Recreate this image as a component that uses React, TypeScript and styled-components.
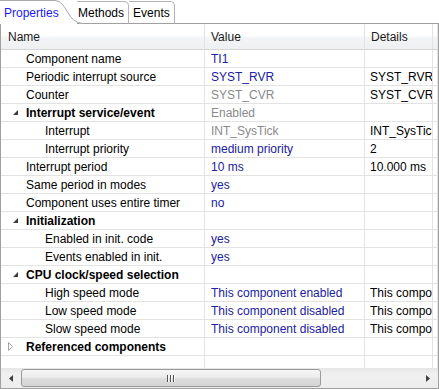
import React from 'react';
import styled, { createGlobalStyle } from 'styled-components';

const GlobalStyle = createGlobalStyle`
  body {
    margin: 0;
    background: #ffffff;
    font-family: 'Liberation Sans', Arial, sans-serif;
    font-size: 12px;
  }
`;

const Frame = styled.div`
  width: 439px;
  height: 389px;
  display: flex;
  flex-direction: column;
  background: #ffffff;
  overflow: hidden;
`;

const TabStrip = styled.div`
  display: flex;
  height: 24px;
  flex-shrink: 0;
`;

const ActiveTab = styled.div`
  display: flex;
  align-items: stretch;
  color: #1a1af0;
  margin-right: -8px;
  position: relative;
  z-index: 1;
`;

const ActiveLabel = styled.div`
  display: flex;
  align-items: center;
  padding-left: 4px;
  width: 49px;
  border-top: 1px solid #a8a8a8;
`;

const Tab = styled.div<{ $first?: boolean }>`
  display: flex;
  align-items: center;
  padding: 0 4px 0 ${(p) => (p.$first ? '1px' : '4px')};
  margin-top: 1px;
  color: #000000;
  border-top: 1px solid #b4b4b4;
  border-right: 1px solid #b4b4b4;
  border-bottom: 1px solid #a0a0a0;
  border-top-right-radius: 5px;
`;

const TabFiller = styled.div`
  flex: 1;
  border-bottom: 1px solid #a0a0a0;
`;

const Panel = styled.div`
  flex: 1;
  display: flex;
  flex-direction: column;
  border: 1px solid #a0a0a0;
  border-top: none;
  min-height: 0;
`;

const TableView = styled.div`
  flex: 1;
  overflow: hidden;
`;

const columns = '204px 160px 68px 1fr';

const HeaderRow = styled.div`
  display: grid;
  grid-template-columns: ${columns};
  height: 26px;
  box-sizing: border-box;
  border-bottom: 1px solid #d5d5d5;
  background: linear-gradient(#ffffff, #ffffff 45%, #f3f4f6 55%, #eef0f2);
`;

const HeaderCell = styled.div<{ $pad: number }>`
  display: flex;
  align-items: center;
  padding-left: ${(p) => p.$pad}px;
  border-right: 1px solid #e2e3e5;
  color: #1a1a1a;
  white-space: nowrap;
  overflow: hidden;
`;

const Row = styled.div`
  display: grid;
  grid-template-columns: ${columns};
  height: 18px;
  box-sizing: border-box;
  border-bottom: 1px solid #e3e3e3;
`;

const Cell = styled.div<{ $pad: number; $tone?: 'blue' | 'gray' | 'black' }>`
  display: flex;
  align-items: center;
  padding-left: ${(p) => p.$pad}px;
  border-right: 1px solid #e3e3e3;
  white-space: nowrap;
  overflow: hidden;
  color: ${(p) => (p.$tone === 'blue' ? '#2121a0' : p.$tone === 'gray' ? '#8a8a8a' : '#000000')};
`;

const NameCell = styled.div<{ $level: number; $bold?: boolean }>`
  display: flex;
  align-items: center;
  padding-left: ${(p) => 7 + p.$level * 19}px;
  border-right: 1px solid #e3e3e3;
  white-space: nowrap;
  overflow: hidden;
  color: #000000;
  font-weight: ${(p) => (p.$bold ? 'bold' : 'normal')};
`;

const Toggle = styled.svg`
  flex-shrink: 0;
  width: 18px;
  height: 17px;
`;

const ScrollBar = styled.div`
  display: flex;
  height: 20px;
  flex-shrink: 0;
  background: linear-gradient(#e6e6e6, #f0f0f0 30%, #ededed);
`;

const ArrowButton = styled.div`
  width: 20px;
  display: flex;
  align-items: center;
  justify-content: center;
`;

const Thumb = styled.div`
  width: 298px;
  margin: 1px 0;
  border: 1px solid #9a9a9a;
  border-radius: 3px;
  background: linear-gradient(#f6f6f6, #ececec 45%, #dcdcdc 55%, #d4d4d4);
  display: flex;
  align-items: center;
  justify-content: center;
  gap: 1px;
`;

const Grip = styled.span`
  width: 1px;
  height: 7px;
  background: #555555;
  box-shadow: 1px 0 0 #f8f8f8;
  margin-right: 1px;
`;

const Track = styled.div`
  flex: 1;
`;

type Tone = 'blue' | 'gray' | 'black';

type Prop = {
  name: string;
  level: number;
  group?: 'open' | 'closed';
  value?: string;
  tone?: Tone;
  details?: string;
};

const props: Prop[] = [
  { name: 'Component name', level: 0, value: 'TI1', tone: 'blue' },
  { name: 'Periodic interrupt source', level: 0, value: 'SYST_RVR', tone: 'blue', details: 'SYST_RVR' },
  { name: 'Counter', level: 0, value: 'SYST_CVR', tone: 'gray', details: 'SYST_CVR' },
  { name: 'Interrupt service/event', level: 0, group: 'open', value: 'Enabled', tone: 'gray' },
  { name: 'Interrupt', level: 1, value: 'INT_SysTick', tone: 'gray', details: 'INT_SysTick' },
  { name: 'Interrupt priority', level: 1, value: 'medium priority', tone: 'blue', details: '2' },
  { name: 'Interrupt period', level: 0, value: '10 ms', tone: 'blue', details: '10.000 ms' },
  { name: 'Same period in modes', level: 0, value: 'yes', tone: 'blue' },
  { name: 'Component uses entire timer', level: 0, value: 'no', tone: 'blue' },
  { name: 'Initialization', level: 0, group: 'open' },
  { name: 'Enabled in init. code', level: 1, value: 'yes', tone: 'blue' },
  { name: 'Events enabled in init.', level: 1, value: 'yes', tone: 'blue' },
  { name: 'CPU clock/speed selection', level: 0, group: 'open' },
  { name: 'High speed mode', level: 1, value: 'This component enabled', tone: 'blue', details: 'This component enabled' },
  { name: 'Low speed mode', level: 1, value: 'This component disabled', tone: 'blue', details: 'This component disabled' },
  { name: 'Slow speed mode', level: 1, value: 'This component disabled', tone: 'blue', details: 'This component disabled' },
  { name: 'Referenced components', level: 0, group: 'closed' },
];

const Expander = ({ state }: { state?: 'open' | 'closed' }) => (
  <Toggle viewBox="0 0 18 17">
    {state === 'open' && <polygon points="10,6 10,11 5,11" fill="#3c3c3c" />}
    {state === 'closed' && (
      <polygon points="0.5,4.5 4.5,8.5 0.5,12.5" fill="none" stroke="#a6a6a6" strokeWidth="1" />
    )}
  </Toggle>
);

const PropertyRow = ({ item }: { item: Prop }) => (
  <Row>
    <NameCell $level={item.level} $bold={!!item.group}>
      <Expander state={item.group} />
      {item.name}
    </NameCell>
    <Cell $pad={6} $tone={item.tone}>
      {item.value}
    </Cell>
    <Cell $pad={5} $tone="black">
      {item.details}
    </Cell>
    <Cell $pad={0} />
  </Row>
);

export default function App() {
  return (
    <Frame>
      <GlobalStyle />
      <TabStrip>
        <ActiveTab>
          <ActiveLabel>Properties</ActiveLabel>
          <svg width="32" height="24" viewBox="0 0 32 24">
            <path d="M0 0.5 H2 C14 0.5 14 23.5 30 23.5 H32" fill="#ffffff" stroke="#a8a8a8" strokeWidth="1" />
          </svg>
        </ActiveTab>
        <Tab $first>Methods</Tab>
        <Tab>Events</Tab>
        <TabFiller />
      </TabStrip>
      <Panel>
        <TableView>
          <HeaderRow>
            <HeaderCell $pad={7}>Name</HeaderCell>
            <HeaderCell $pad={6}>Value</HeaderCell>
            <HeaderCell $pad={6}>Details</HeaderCell>
            <HeaderCell $pad={0} />
          </HeaderRow>
          {props.map((item) => (
            <PropertyRow key={item.name} item={item} />
          ))}
          <PropertyRow item={{ name: '', level: 0 }} />
        </TableView>
        <ScrollBar>
          <ArrowButton>
            <svg width="4" height="7" viewBox="0 0 4 7">
              <polygon points="4,0 4,7 0,3.5" fill="#404040" />
            </svg>
          </ArrowButton>
          <Thumb>
            <Grip />
            <Grip />
            <Grip />
          </Thumb>
          <Track />
          <ArrowButton>
            <svg width="4" height="7" viewBox="0 0 4 7">
              <polygon points="0,0 0,7 4,3.5" fill="#404040" />
            </svg>
          </ArrowButton>
        </ScrollBar>
      </Panel>
    </Frame>
  );
}
